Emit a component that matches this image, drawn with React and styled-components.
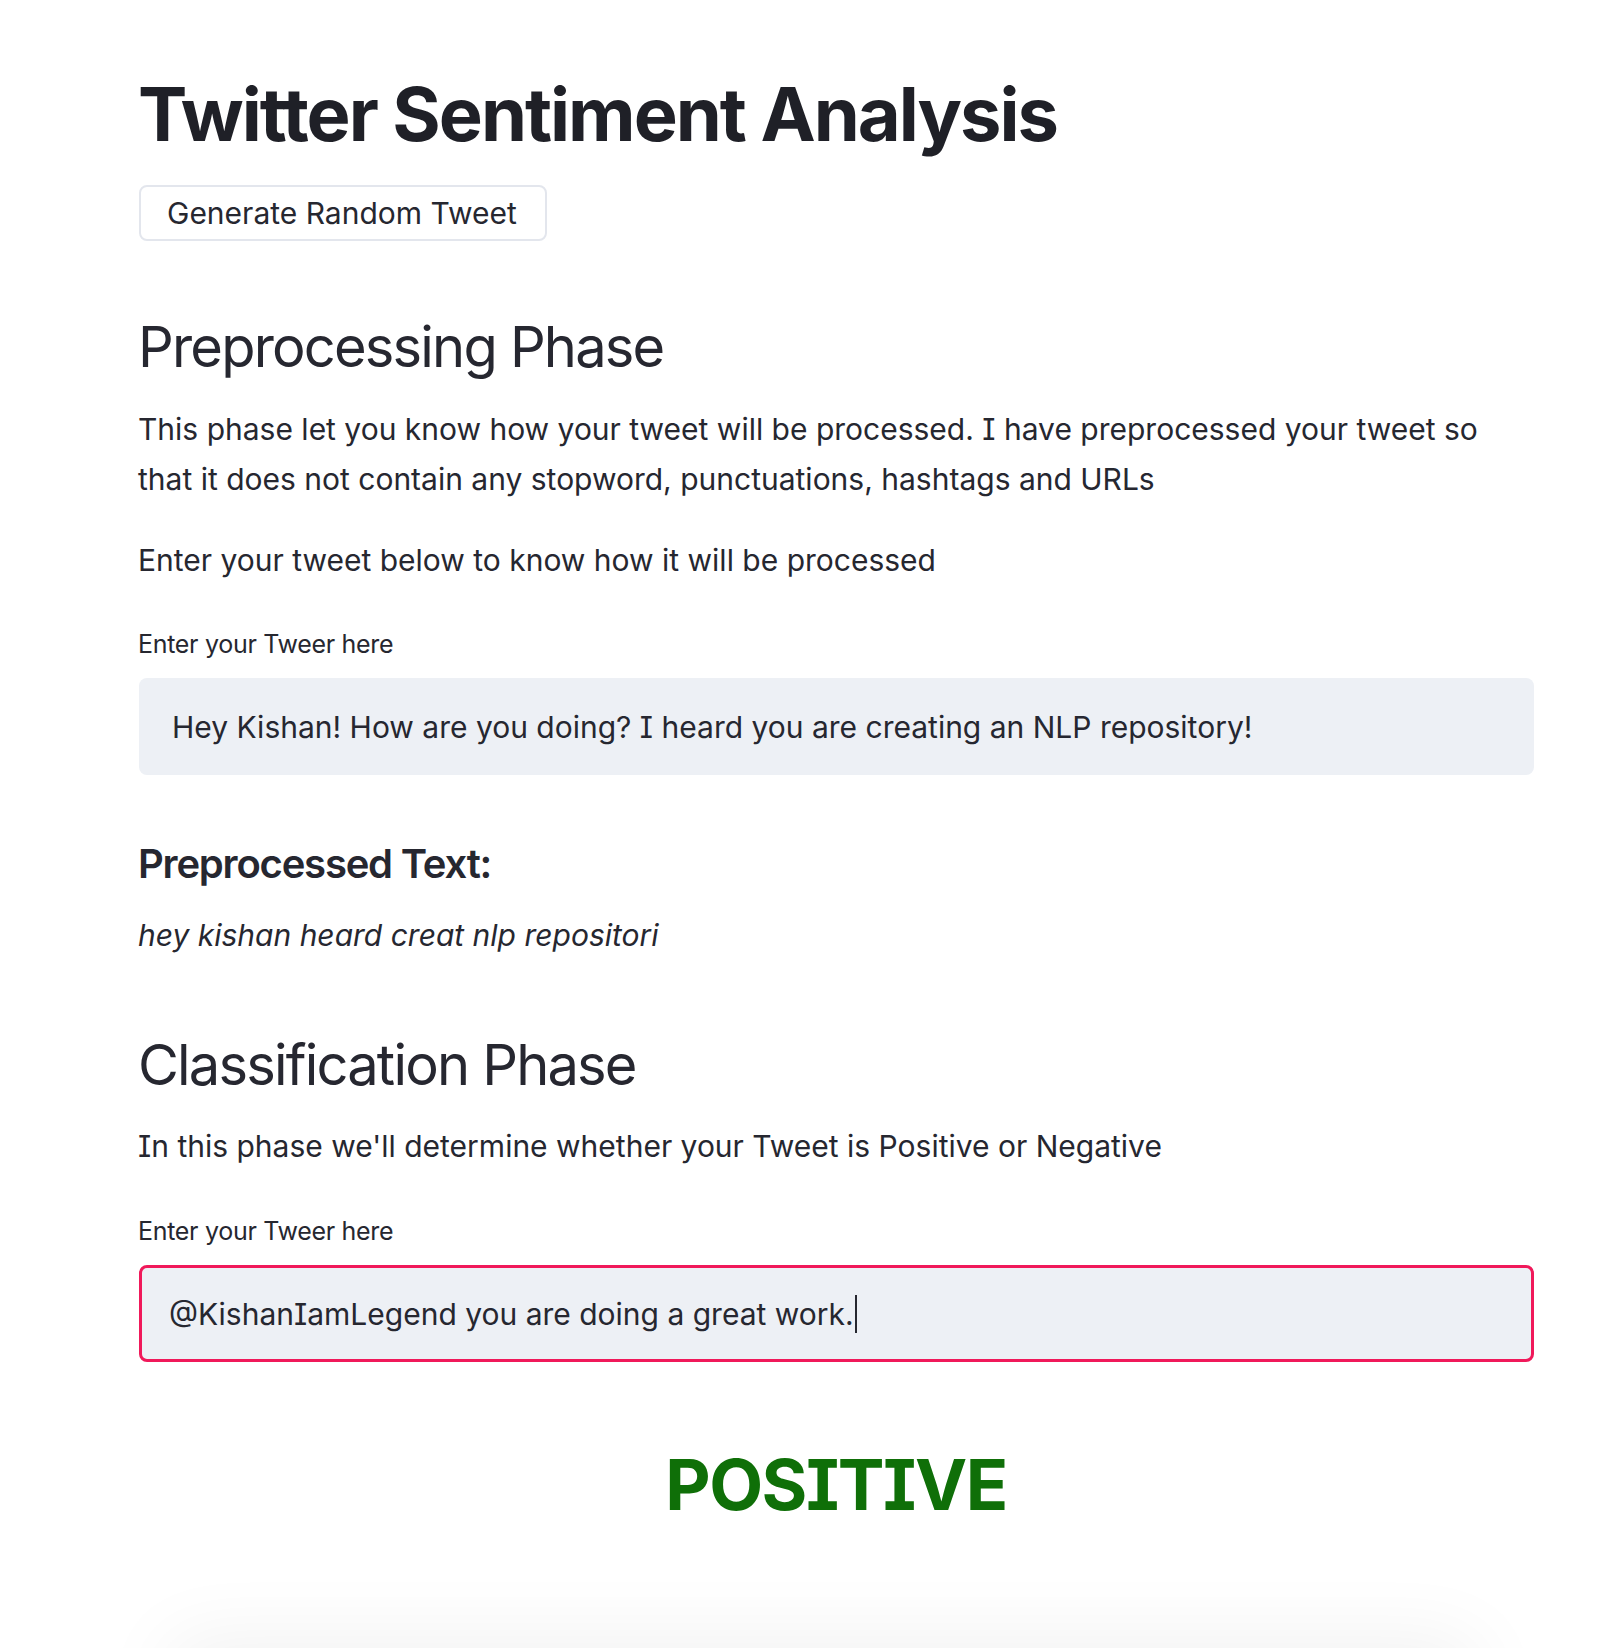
import React from 'react';
import styled, { createGlobalStyle } from 'styled-components';

const GlobalStyle = createGlobalStyle`
  html, body {
    margin: 0;
    padding: 0;
    background: #ffffff;
  }
  body {
    font-family: Inter, "Noto Sans", sans-serif;
    font-feature-settings: "cv08";
    color: #262730;
  }
`;

const Page = styled.div`
  position: relative;
  min-height: 1648px;
  overflow: hidden;
`;

const Main = styled.main`
  width: 1396px;
  padding: 69px 0 0 138px;
  display: flex;
  flex-direction: column;
`;

const Title = styled.h1`
  margin: 0;
  font-size: 74px;
  line-height: 91px;
  font-weight: 700;
  letter-spacing: -2px;
  color: #1f2027;
`;

const Button = styled.button`
  align-self: flex-start;
  margin-top: 25px;
  margin-left: 1px;
  height: 56px;
  padding: 0 28px 0 26px;
  background: #ffffff;
  border: 2px solid #e3e6ed;
  border-radius: 8px;
  font-family: inherit;
  font-feature-settings: "cv08";
  font-size: 30px;
  color: #262730;
  cursor: pointer;
`;

const Heading = styled.h2`
  margin: ${(p) => p.$top}px 0 0;
  font-size: 56px;
  line-height: 72px;
  font-weight: 400;
  letter-spacing: -1.8px;
  color: #262730;
`;

const SubHeading = styled.h3`
  margin: ${(p) => p.$top}px 0 0;
  font-size: 40px;
  line-height: 53px;
  font-weight: 600;
  letter-spacing: -1.2px;
  color: #262730;
`;

const Text = styled.p`
  margin: ${(p) => p.$top}px 0 0;
  font-size: 30px;
  line-height: 50px;
  font-style: ${(p) => (p.$italic ? 'italic' : 'normal')};
  color: #262730;
`;

const Label = styled.label`
  display: block;
  margin-top: ${(p) => p.$top}px;
  font-size: 25px;
  line-height: 38px;
  letter-spacing: -0.3px;
  color: #262730;
`;

const Field = styled.div`
  box-sizing: border-box;
  margin-top: 15px;
  margin-left: 1px;
  height: 97px;
  display: flex;
  align-items: center;
  padding: 0 ${(p) => (p.$focused ? 27 : 30)}px;
  background: #edf0f5;
  border: ${(p) => (p.$focused ? '3px solid #f0195a' : '3px solid transparent')};
  border-radius: 8px;
  font-size: 30px;
  color: #262730;
  white-space: nowrap;
`;

const Caret = styled.span`
  display: inline-block;
  width: 2px;
  height: 38px;
  margin-left: 1px;
  background: #262730;
`;

const Verdict = styled.div`
  margin-top: 78px;
  text-align: center;
  font-size: 70px;
  line-height: 89px;
  font-weight: 700;
  letter-spacing: -1.5px;
  color: #0f6f08;
`;

const BottomShade = styled.div`
  position: absolute;
  left: 190px;
  right: 160px;
  top: 1660px;
  height: 100px;
  box-shadow: 0 0 80px 20px rgba(0, 0, 0, 0.06);
`;

export default function App() {
  return (
    <Page>
      <GlobalStyle />
      <Main>
        <Title>Twitter Sentiment Analysis</Title>
        <Button>Generate Random Tweet</Button>

        <Heading $top={70}>Preprocessing Phase</Heading>
        <Text $top={21}>
          This phase let you know how your tweet will be processed. I have preprocessed your tweet so
          that it does not contain any stopword, punctuations, hashtags and URLs
        </Text>
        <Text $top={31}>Enter your tweet below to know how it will be processed</Text>
        <Label $top={40}>Enter your Tweer here</Label>
        <Field>Hey Kishan! How are you doing? I heard you are creating an NLP repository!</Field>

        <SubHeading $top={62}>Preprocessed Text:</SubHeading>
        <Text $top={20} $italic>hey kishan heard creat nlp repositori</Text>

        <Heading $top={69}>Classification Phase</Heading>
        <Text $top={20}>In this phase we'll determine whether your Tweet is Positive or Negative</Text>
        <Label $top={41}>Enter your Tweer here</Label>
        <Field $focused>
          @KishanIamLegend you are doing a great work.
          <Caret />
        </Field>

        <Verdict>POSITIVE</Verdict>
      </Main>
      <BottomShade />
    </Page>
  );
}
